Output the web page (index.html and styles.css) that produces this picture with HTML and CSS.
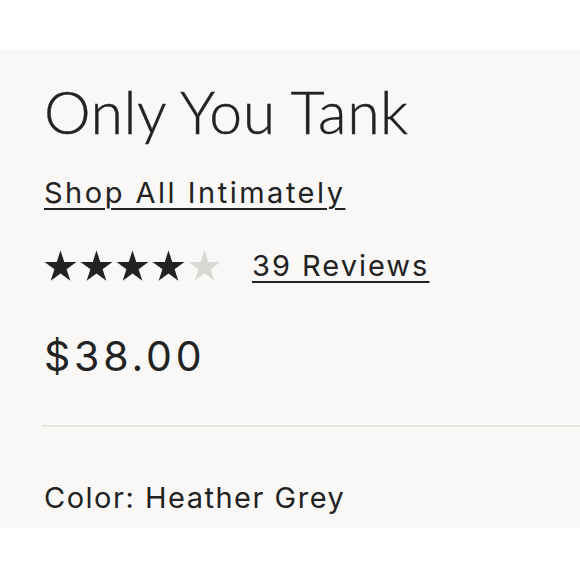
FILE: index.html
```html
<!DOCTYPE html>
<html>
<head>
<meta charset="utf-8">
<link rel="stylesheet" href="styles.css">
</head>
<body>
<div class="top"></div>
<main class="panel">
  <h1 class="title">Only You Tank</h1>
  <a class="shop-link" href="#">Shop All Intimately</a>
  <div class="rating">
    <div class="stars">
      <svg class="star on" viewBox="0 0 24 24"><path d="M12 1L14.74 9.43L23.6 9.43L16.43 14.64L19.17 23.07L12 17.86L4.83 23.07L7.57 14.64L0.4 9.43L9.26 9.43Z"/></svg>
      <svg class="star on" viewBox="0 0 24 24"><path d="M12 1L14.74 9.43L23.6 9.43L16.43 14.64L19.17 23.07L12 17.86L4.83 23.07L7.57 14.64L0.4 9.43L9.26 9.43Z"/></svg>
      <svg class="star on" viewBox="0 0 24 24"><path d="M12 1L14.74 9.43L23.6 9.43L16.43 14.64L19.17 23.07L12 17.86L4.83 23.07L7.57 14.64L0.4 9.43L9.26 9.43Z"/></svg>
      <svg class="star on" viewBox="0 0 24 24"><path d="M12 1L14.74 9.43L23.6 9.43L16.43 14.64L19.17 23.07L12 17.86L4.83 23.07L7.57 14.64L0.4 9.43L9.26 9.43Z"/></svg>
      <svg class="star off" viewBox="0 0 24 24"><path d="M12 1L14.74 9.43L23.6 9.43L16.43 14.64L19.17 23.07L12 17.86L4.83 23.07L7.57 14.64L0.4 9.43L9.26 9.43Z"/></svg>
    </div>
    <a class="reviews" href="#">39 Reviews</a>
  </div>
  <div class="price">$38.00</div>
  <hr class="divider">
  <div class="color">Color: Heather Grey</div>
</main>
</body>
</html>
```

FILE: styles.css
```css
html, body {
  margin: 0;
  padding: 0;
  background: #ffffff;
}
body {
  width: 580px;
  height: 580px;
  overflow: hidden;
  color: #222222;
  font-family: "Inter", "Liberation Sans", sans-serif;
}
.top {
  height: 50px;
}
.panel {
  background: #f9f8f6;
  height: 478px;
  padding-left: 44px;
  box-sizing: border-box;
  display: flex;
  flex-direction: column;
  align-items: flex-start;
}
.title {
  font-family: "Lato", sans-serif;
  font-weight: 300;
  font-size: 59px;
  line-height: 59px;
  margin: 32px 0 0 0;
  letter-spacing: 0.5px;
  -webkit-text-stroke: 0.4px #222222;
}
.shop-link {
  margin-top: 36px;
  font-size: 29px;
  line-height: 32px;
  letter-spacing: 2.5px;
  color: #222;
  text-decoration: underline;
  text-decoration-thickness: 2px;
  text-underline-offset: 5px;
}
.rating {
  display: flex;
  align-items: center;
  margin-top: 40px;
  gap: 31px;
}
.stars {
  display: flex;
  gap: 3px;
}
.star {
  width: 33px;
  height: 33px;
  display: block;
}
.star.on { fill: #222222; }
.star.off { fill: #dad8d5; }
.reviews {
  font-size: 29px;
  line-height: 32px;
  letter-spacing: 2px;
  color: #222;
  text-decoration: underline;
  text-decoration-thickness: 2px;
  text-underline-offset: 5px;
}
.price {
  margin-top: 52px;
  font-size: 41px;
  line-height: 44px;
  letter-spacing: 3.8px;
}
.divider {
  align-self: stretch;
  margin: 47px 0 0 -2px;
  border: 0;
  height: 2px;
  background: #e8e5e1;
}
.color {
  margin-top: 55px;
  font-size: 29px;
  line-height: 32px;
  letter-spacing: 1.5px;
}
```
